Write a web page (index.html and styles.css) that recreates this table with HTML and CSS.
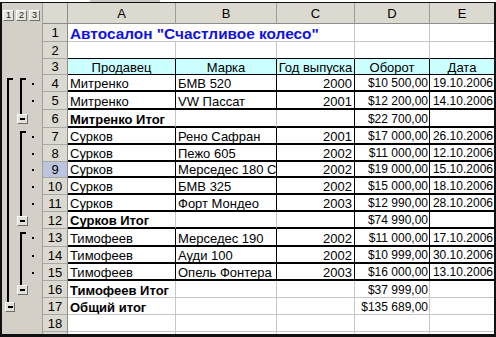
FILE: index.html
```html
<!DOCTYPE html>
<html lang="ru">
<head>
<meta charset="utf-8">
<title>Автосалон</title>
<link rel="stylesheet" href="styles.css">
</head>
<body>
<div class="strip"><div class="strip-seg"></div></div>
<div class="frame">
<div class="sheet">
  <div class="row">
    <div class="oh"><span class="lvl">1</span><span class="lvl">2</span><span class="lvl">3</span></div>
    <div class="corner"></div>
    <div class="ch">A</div><div class="ch">B</div><div class="ch">C</div><div class="ch">D</div><div class="ch last">E</div>
  </div>
  <div class="row">
    <div class="o"></div><div class="rh">1</div>
    <div class="c title">Автосалон "Счастливое колесо"</div><div class="c"></div><div class="c e"></div>
  </div>
  <div class="row pre">
    <div class="o"></div><div class="rh">2</div>
    <div class="c"></div><div class="c"></div><div class="c"></div><div class="c"></div><div class="c e"></div>
  </div>
  <div class="row head">
    <div class="o"></div><div class="rh">3</div>
    <div class="c">Продавец</div><div class="c">Марка</div><div class="c">Год выпуска</div><div class="c">Оборот</div><div class="c e">Дата</div>
  </div>
  <div class="row det">
    <div class="o"><i class="g l1 top"></i><i class="g l2 top"></i><i class="dot"></i></div><div class="rh">4</div>
    <div class="c">Митренко</div><div class="c">БМВ 520</div><div class="c r">2000</div><div class="c r n">$10 500,00</div><div class="c r n e">19.10.2006</div>
  </div>
  <div class="row det">
    <div class="o"><i class="g l1 ln"></i><i class="g l2 ln"></i><i class="dot"></i></div><div class="rh">5</div>
    <div class="c">Митренко</div><div class="c">VW Пассат</div><div class="c r">2001</div><div class="c r n">$12 200,00</div><div class="c r n e">14.10.2006</div>
  </div>
  <div class="row sub">
    <div class="o"><i class="g l1 ln"></i><i class="g l2 end"><b class="btn"></b></i><i></i></div><div class="rh">6</div>
    <div class="c b">Митренко Итог</div><div class="c"></div><div class="c k"></div><div class="c r n k">$22 700,00</div><div class="c e"></div>
  </div>
  <div class="row det">
    <div class="o"><i class="g l1 ln"></i><i class="g l2 top"></i><i class="dot"></i></div><div class="rh">7</div>
    <div class="c">Сурков</div><div class="c">Рено Сафран</div><div class="c r">2001</div><div class="c r n">$17 000,00</div><div class="c r n e">26.10.2006</div>
  </div>
  <div class="row det">
    <div class="o"><i class="g l1 ln"></i><i class="g l2 ln"></i><i class="dot"></i></div><div class="rh">8</div>
    <div class="c">Сурков</div><div class="c">Пежо 605</div><div class="c r">2002</div><div class="c r n">$11 000,00</div><div class="c r n e">12.10.2006</div>
  </div>
  <div class="row det">
    <div class="o"><i class="g l1 ln"></i><i class="g l2 ln"></i><i class="dot"></i></div><div class="rh sel">9</div>
    <div class="c">Сурков</div><div class="c">Мерседес 180 С</div><div class="c r">2002</div><div class="c r n">$19 000,00</div><div class="c r n e">15.10.2006</div>
  </div>
  <div class="row det">
    <div class="o"><i class="g l1 ln"></i><i class="g l2 ln"></i><i class="dot"></i></div><div class="rh">10</div>
    <div class="c">Сурков</div><div class="c">БМВ 325</div><div class="c r">2002</div><div class="c r n">$15 000,00</div><div class="c r n e">18.10.2006</div>
  </div>
  <div class="row det">
    <div class="o"><i class="g l1 ln"></i><i class="g l2 ln"></i><i class="dot"></i></div><div class="rh">11</div>
    <div class="c">Сурков</div><div class="c">Форт Мондео</div><div class="c r">2003</div><div class="c r n">$12 990,00</div><div class="c r n e">28.10.2006</div>
  </div>
  <div class="row sub">
    <div class="o"><i class="g l1 ln"></i><i class="g l2 end"><b class="btn"></b></i><i></i></div><div class="rh">12</div>
    <div class="c b">Сурков Итог</div><div class="c"></div><div class="c k"></div><div class="c r n k">$74 990,00</div><div class="c e"></div>
  </div>
  <div class="row det">
    <div class="o"><i class="g l1 ln"></i><i class="g l2 top"></i><i class="dot"></i></div><div class="rh">13</div>
    <div class="c">Тимофеев</div><div class="c">Мерседес 190</div><div class="c r">2002</div><div class="c r n">$11 000,00</div><div class="c r n e">17.10.2006</div>
  </div>
  <div class="row det">
    <div class="o"><i class="g l1 ln"></i><i class="g l2 ln"></i><i class="dot"></i></div><div class="rh">14</div>
    <div class="c">Тимофеев</div><div class="c">Ауди 100</div><div class="c r">2002</div><div class="c r n">$10 999,00</div><div class="c r n e">30.10.2006</div>
  </div>
  <div class="row det">
    <div class="o"><i class="g l1 ln"></i><i class="g l2 ln"></i><i class="dot"></i></div><div class="rh">15</div>
    <div class="c">Тимофеев</div><div class="c">Опель Фонтера</div><div class="c r">2003</div><div class="c r n">$16 000,00</div><div class="c r n e">13.10.2006</div>
  </div>
  <div class="row">
    <div class="o"><i class="g l1 ln"></i><i class="g l2 end"><b class="btn"></b></i><i></i></div><div class="rh">16</div>
    <div class="c b">Тимофеев Итог</div><div class="c"></div><div class="c"></div><div class="c r n">$37 999,00</div><div class="c e"></div>
  </div>
  <div class="row">
    <div class="o"><i class="g l1 end"><b class="btn"></b></i><i></i><i></i></div><div class="rh">17</div>
    <div class="c b">Общий итог</div><div class="c"></div><div class="c"></div><div class="c r n">$135 689,00</div><div class="c e"></div>
  </div>
  <div class="row">
    <div class="o"></div><div class="rh">18</div>
    <div class="c"></div><div class="c"></div><div class="c"></div><div class="c"></div><div class="c e"></div>
  </div>
  <div class="row">
    <div class="o"></div><div class="rh"></div>
    <div class="c"></div><div class="c"></div><div class="c"></div><div class="c"></div><div class="c e"></div>
  </div>
</div>
</div>
</body>
</html>
```

FILE: styles.css
```css
* { box-sizing: border-box; margin: 0; padding: 0; }
html, body { background: #fff; }
body {
  width: 496px;
  height: 337px;
  overflow: hidden;
  font-family: "Liberation Sans", Arial, sans-serif;
  font-size: 13px;
  color: #000;
}
.strip { height: 2px; display: flex; }
.strip-seg { margin-left: 90px; width: 70px; background: #cfccc5; }
.frame {
  height: 335px;
  border: solid #111;
  border-width: 1px 2px 3px 2px;
  overflow: hidden;
}
.sheet {
  display: grid;
  grid-template-columns: 41px 25px 108px 101px 78px 75px 64px;
  grid-template-rows: 21px 18px 17px 16px 17px 18px 18px 17px 17px 16px 17px 17px 17px 18px 17px 17px 17px 17px 17px 17px;
}
.row { display: contents; }

/* outline gutter */
.oh {
  background: #d4d0c8;
  border-right: 1px solid #a19e97;
  display: flex;
  gap: 2px;
  padding: 7px 0 0 1px;
}
.lvl {
  width: 11px;
  height: 11px;
  background: #e6e3dc;
  border: 1px solid;
  border-color: #fff #6f6f6f #6f6f6f #fff;
  font-size: 9px;
  line-height: 9px;
  text-align: center;
  color: #222;
}
.o {
  background: #d4d0c8;
  border-right: 1px solid #a19e97;
  display: grid;
  grid-template-columns: 13px 13px 14px;
}
.g { display: flex; align-items: center; }
.l1 { padding-left: 3px; }
.l2 { padding-left: 2px; }
.ln { background: linear-gradient(#000, #000) 5px 0 / 2px 100% no-repeat; }
.top {
  background:
    linear-gradient(#000, #000) 5px 3px / 6px 2px no-repeat,
    linear-gradient(#000, #000) 5px 3px / 2px 100% no-repeat;
}
.end { background: linear-gradient(#000, #000) 5px 0 / 2px 50% no-repeat; }
.dot { background: linear-gradient(#000, #000) 4px 50% / 2px 2px no-repeat; }
.btn {
  width: 11px;
  height: 10px;
  background: linear-gradient(#000, #000) 50% 50% / 5px 2px no-repeat, #e2dfd8;
  border: 1px solid;
  border-color: #fff #6e6e6e #6e6e6e #fff;
}

/* headers */
.corner {
  background: #dcd9d1;
  border-right: 1px solid #8c8c8c;
  border-bottom: 1px solid #8c8c8c;
}
.ch {
  background: #dcd9d1;
  border-right: 1px solid #9c9c9c;
  border-bottom: 1px solid #8c8c8c;
  display: flex;
  align-items: center;
  justify-content: center;
  padding-top: 1px;
}
.ch.last { border-right: 0; }
.rh {
  background: #dcd9d1;
  border-right: 1px solid #8c8c8c;
  border-bottom: 1px solid #a8a8a8;
  display: flex;
  align-items: center;
  justify-content: center;
}
.rh.sel { background: #bcc5dd; }

/* cells */
.c {
  border-right: 1px solid #c6c6c6;
  border-bottom: 1px solid #c6c6c6;
  display: flex;
  align-items: flex-end;
  white-space: nowrap;
  overflow: hidden;
  padding: 0 2px;
  line-height: 13px;
}
.c.e { border-right: 0; }
.c.r { justify-content: flex-end; }
.c.n { font-size: 12px; padding-right: 1px; }
.c.b { font-weight: bold; }
.title {
  grid-column: span 3;
  color: #1212e2;
  font-weight: bold;
  font-size: 15.4px;
  line-height: 15px;
  overflow: visible;
}
.pre > .c { border-bottom-color: #000; }
.head > .c {
  background: #ccffff;
  border-right-color: #000;
  border-bottom-color: #000;
  justify-content: center;
  padding: 0;
}
.det > .c { border-right-color: #000; border-bottom: 2px solid #000; }
.sub > .c { border-bottom: 2px solid #000; }
.sub > .c.k { border-right-color: #000; }
```
